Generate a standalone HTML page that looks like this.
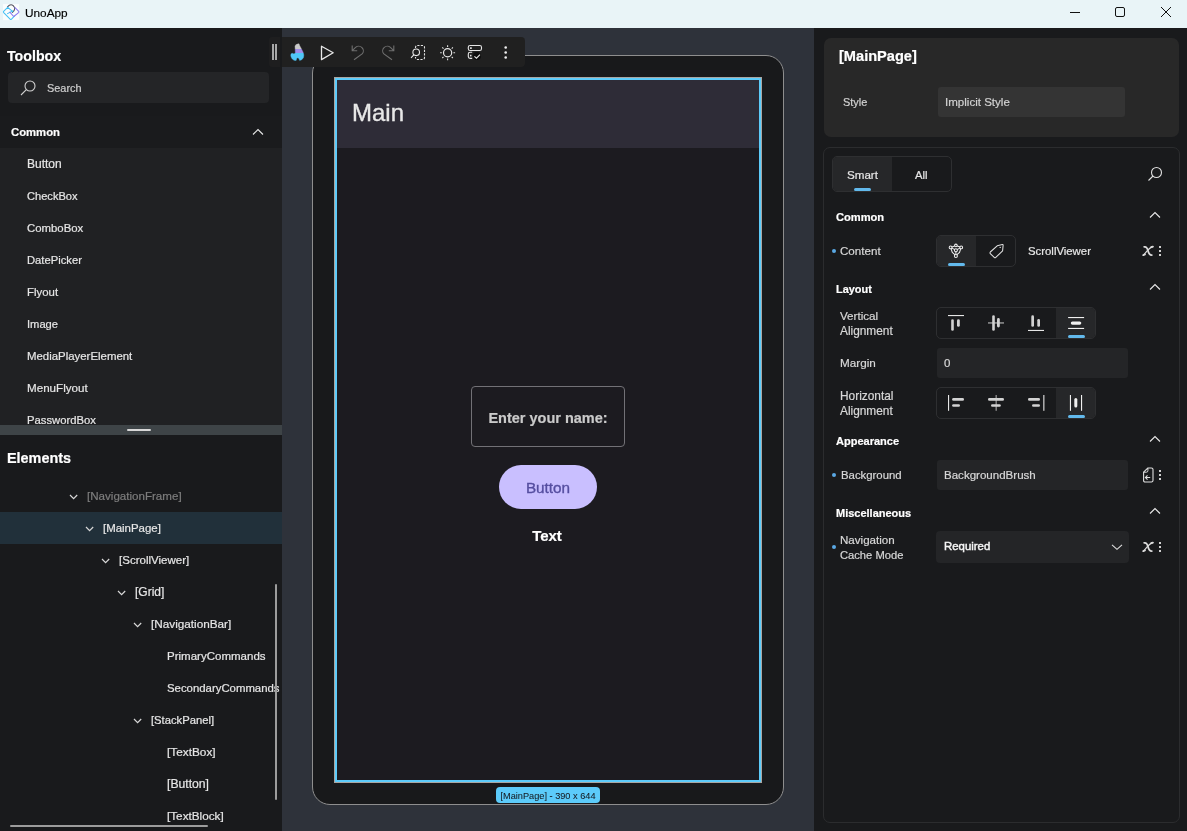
<!DOCTYPE html>
<html><head><meta charset="utf-8"><style>
html,body{margin:0;padding:0;width:1187px;height:831px;overflow:hidden;background:#1a1b1d;}
body{position:relative;font-family:"Liberation Sans",sans-serif;}
.a{position:absolute;box-sizing:border-box;}
.t{position:absolute;white-space:nowrap;line-height:1;-webkit-text-stroke:0.2px currentColor;will-change:transform;}
</style></head><body>
<div class="a" style="left:0px;top:0px;width:1187px;height:28px;background:#e9f4f7;"></div>
<svg class="a" style="left:2px;top:3px;" width="18" height="18" viewBox="0 0 18 18"><rect x="1.1" y="1.1" width="16" height="16" fill="#fbfdfd"/>
<g fill="none" stroke-width="1.05" stroke-linecap="round" stroke-linejoin="round">
<path d="M5.5 3.8 Q8.5 0.3 11.2 2.6 L12.4 4.2 Q13.6 6.3 10.4 9.4" stroke="#50505e"/>
<path d="M5.7 4.3 L1.6 8.3 Q1.1 9 1.7 9.7 L8.1 16.2 Q8.8 16.9 9.5 16.2 L12.4 13.1 M5.7 4.3 L10.8 8.7 M5.5 10.6 L10.6 8" stroke="#45c0f5"/>
<path d="M13 4.6 L16.7 8.3 Q17.2 9 16.6 9.6 L12.4 13 Q11.8 13.5 11.2 13 L7.9 9.2" stroke="#8a78f0"/>
</g></svg>
<div class="t" style="left:25px;top:8px;font-size:11.82px;font-weight:400;color:#000;-webkit-text-stroke:0.15px #000;">UnoApp</div>
<div class="a" style="left:1070px;top:12px;width:10px;height:1px;background:#111;"></div>
<svg class="a" style="left:1115px;top:7px;" width="10" height="10" viewBox="0 0 10 10"><rect x="0.5" y="0.5" width="9" height="9" rx="1.5" fill="none" stroke="#111" stroke-width="1"/></svg>
<svg class="a" style="left:1160px;top:6px;" width="12" height="12" viewBox="0 0 12 12"><path d="M1 1 L11 11 M11 1 L1 11" stroke="#111" stroke-width="1" fill="none"/></svg>
<div class="a" style="left:0px;top:28px;width:282px;height:803px;background:#191a1c;"></div>
<div class="t" style="left:7px;top:49px;font-size:14.2px;font-weight:700;color:#ffffff;">Toolbox</div>
<div class="a" style="left:8px;top:72px;width:261px;height:31px;background:#242527;border-radius:4px;"></div>
<svg class="a" style="left:19px;top:79px;" width="18" height="18" viewBox="0 0 18 18"><circle cx="11" cy="7" r="5" fill="none" stroke="#d0d0d0" stroke-width="1.1"/><path d="M7.3 10.7 L2 16" stroke="#d0d0d0" stroke-width="1.1"/></svg>
<div class="t" style="left:47px;top:83px;font-size:10.9px;font-weight:400;color:#cfcfcf;">Search</div>
<div class="a" style="left:0px;top:116px;width:282px;height:32px;background:#1a1b1d;"></div>
<div class="t" style="left:11px;top:127px;font-size:11.3px;font-weight:700;color:#ffffff;">Common</div>
<svg class="a" style="left:252px;top:128px;" width="12" height="8" viewBox="0 0 12 8"><path d="M1 6.5 L6 1.5 L11 6.5" stroke="#e8e8e8" stroke-width="1.1" fill="none"/></svg>
<div class="a" style="left:0px;top:148px;width:282px;height:277px;background:#202123;"></div>
<div class="t" style="left:27px;top:158px;font-size:12.0px;font-weight:400;color:#e6e6e6;">Button</div>
<div class="t" style="left:27px;top:191px;font-size:11.1px;font-weight:400;color:#e6e6e6;">CheckBox</div>
<div class="t" style="left:27px;top:223px;font-size:11.38px;font-weight:400;color:#e6e6e6;">ComboBox</div>
<div class="t" style="left:27px;top:255px;font-size:11.22px;font-weight:400;color:#e6e6e6;">DatePicker</div>
<div class="t" style="left:27px;top:287px;font-size:11.42px;font-weight:400;color:#e6e6e6;">Flyout</div>
<div class="t" style="left:27px;top:319px;font-size:11.16px;font-weight:400;color:#e6e6e6;">Image</div>
<div class="t" style="left:27px;top:351px;font-size:11.41px;font-weight:400;color:#e6e6e6;">MediaPlayerElement</div>
<div class="t" style="left:27px;top:382px;font-size:11.62px;font-weight:400;color:#e6e6e6;">MenuFlyout</div>
<div class="t" style="left:27px;top:415px;font-size:11.27px;font-weight:400;color:#e6e6e6;">PasswordBox</div>
<div class="a" style="left:0px;top:425px;width:282px;height:10px;background:#3e4447;"></div>
<div class="a" style="left:127px;top:429px;width:24px;height:2px;background:#d8d8d8;border-radius:1px;"></div>
<div class="a" style="left:0px;top:435px;width:282px;height:396px;background:#191a1c;"></div>
<div class="t" style="left:7px;top:451px;font-size:14.4px;font-weight:700;color:#ffffff;">Elements</div>
<div class="a" style="left:0px;top:512px;width:282px;height:32px;background:#21303a;"></div>
<svg class="a" style="left:68.7px;top:492.5px;" width="9" height="7" viewBox="0 0 9 7"><path d="M1 2 L4.6 5.6 L8.2 2" stroke="#d8d8d8" stroke-width="1.2" fill="none"/></svg>
<div class="t" style="left:86.7px;top:491px;font-size:11.58px;font-weight:400;color:#7d7d7d;">[NavigationFrame]</div>
<svg class="a" style="left:84.7px;top:524.5px;" width="9" height="7" viewBox="0 0 9 7"><path d="M1 2 L4.6 5.6 L8.2 2" stroke="#d8d8d8" stroke-width="1.2" fill="none"/></svg>
<div class="t" style="left:102.7px;top:523px;font-size:11.44px;font-weight:400;color:#e6e6e6;">[MainPage]</div>
<svg class="a" style="left:100.7px;top:556.5px;" width="9" height="7" viewBox="0 0 9 7"><path d="M1 2 L4.6 5.6 L8.2 2" stroke="#d8d8d8" stroke-width="1.2" fill="none"/></svg>
<div class="t" style="left:118.7px;top:555px;font-size:11.53px;font-weight:400;color:#e6e6e6;">[ScrollViewer]</div>
<svg class="a" style="left:116.69999999999999px;top:588.5px;" width="9" height="7" viewBox="0 0 9 7"><path d="M1 2 L4.6 5.6 L8.2 2" stroke="#d8d8d8" stroke-width="1.2" fill="none"/></svg>
<div class="t" style="left:134.7px;top:586px;font-size:12.02px;font-weight:400;color:#e6e6e6;">[Grid]</div>
<svg class="a" style="left:132.7px;top:620.5px;" width="9" height="7" viewBox="0 0 9 7"><path d="M1 2 L4.6 5.6 L8.2 2" stroke="#d8d8d8" stroke-width="1.2" fill="none"/></svg>
<div class="t" style="left:150.7px;top:618px;font-size:11.74px;font-weight:400;color:#e6e6e6;">[NavigationBar]</div>
<div class="t" style="left:166.7px;top:651px;font-size:11.52px;font-weight:400;color:#e6e6e6;">PrimaryCommands</div>
<div class="t" style="left:166.7px;top:683px;font-size:11.38px;font-weight:400;color:#e6e6e6;">SecondaryCommands</div>
<svg class="a" style="left:132.7px;top:716.5px;" width="9" height="7" viewBox="0 0 9 7"><path d="M1 2 L4.6 5.6 L8.2 2" stroke="#d8d8d8" stroke-width="1.2" fill="none"/></svg>
<div class="t" style="left:150.7px;top:715px;font-size:11.24px;font-weight:400;color:#e6e6e6;">[StackPanel]</div>
<div class="t" style="left:166.7px;top:747px;font-size:11.82px;font-weight:400;color:#e6e6e6;">[TextBox]</div>
<div class="t" style="left:166.7px;top:778px;font-size:12.2px;font-weight:400;color:#e6e6e6;">[Button]</div>
<div class="t" style="left:166.7px;top:810px;font-size:11.73px;font-weight:400;color:#e6e6e6;">[TextBlock]</div>
<div class="a" style="left:275px;top:584px;width:2px;height:216px;background:#9c9c9c;border-radius:1px;"></div>
<div class="a" style="left:10px;top:825px;width:198px;height:2px;background:#9c9c9c;border-radius:1px;"></div>
<div class="a" style="left:282px;top:28px;width:532px;height:803px;background:#2e323a;"></div>
<div class="a" style="left:312px;top:55px;width:472px;height:750px;background:#18191b;border:1px solid #8e8e8e;border-radius:18px;"></div>
<div class="a" style="left:334px;top:77px;width:428px;height:706px;background:#1c1b20;border:1px solid #a9a6a2;"></div>
<div class="a" style="left:335px;top:78px;width:426px;height:704px;border:2px solid #5ccbfa;"></div>
<div class="a" style="left:337px;top:80px;width:422px;height:68px;background:#2e2c37;"></div>
<div class="t" style="left:352px;top:101px;font-size:24.0px;font-weight:400;color:#e8e8e8;-webkit-text-stroke:0.35px #e8e8e8;">Main</div>
<div class="a" style="left:471px;top:386px;width:154px;height:61px;border:1px solid #727176;border-radius:4px;"></div>
<div class="t" style="left:247.5px;width:600px;text-align:center;top:411px;font-size:14.5px;font-weight:700;color:#cacaca;">Enter your name:</div>
<div class="a" style="left:499px;top:465px;width:98px;height:43.5px;background:#c9bfff;border-radius:22px;"></div>
<div class="t" style="left:248px;width:600px;text-align:center;top:480px;font-size:15.3px;font-weight:400;color:#554ea0;-webkit-text-stroke:0.35px #554ea0;">Button</div>
<div class="t" style="left:247px;width:600px;text-align:center;top:528px;font-size:15.0px;font-weight:700;color:#ffffff;">Text</div>
<div class="a" style="left:496px;top:787px;width:104px;height:16px;background:#5ccbfa;border-radius:4px;"></div>
<div class="t" style="left:248px;width:600px;text-align:center;top:792px;font-size:9.2px;font-weight:400;color:#151a20;-webkit-text-stroke:0.05px #151a20;">[MainPage] - 390 x 644</div>
<div class="a" style="left:282px;top:37px;width:243px;height:30px;background:#202020;border-radius:0 4px 4px 0;"></div>
<div class="a" style="left:269px;top:37px;width:11px;height:30px;background:#1e1e1f;border-radius:3px 0 0 3px;"></div>
<div class="a" style="left:272px;top:44px;width:2px;height:16px;background:#a8a8a8;"></div>
<div class="a" style="left:275px;top:44px;width:2px;height:16px;background:#a8a8a8;"></div>
<svg class="a" style="left:286px;top:40px;" width="54" height="24" viewBox="0 0 54 24"><path d="M35.5 6.2 L47.2 12.8 L35.5 19.6 Z" fill="none" stroke="#e8e8e8" stroke-width="1.3" stroke-linejoin="round"/></svg>
<svg class="a" style="left:288px;top:42px;" width="20" height="20" viewBox="0 0 20 20"><defs><linearGradient id="fl2" gradientUnits="userSpaceOnUse" x1="0" y1="2" x2="0" y2="18.5"><stop offset="0" stop-color="#c9c9c9"/><stop offset="0.31" stop-color="#c9c9c9"/><stop offset="0.31" stop-color="#9f8de8"/><stop offset="0.55" stop-color="#9f8de8"/><stop offset="0.55" stop-color="#50c7f7"/><stop offset="1" stop-color="#50c7f7"/></linearGradient></defs>
<path d="M11 1.8 L11.6 3.5 L13.5 7 L15.2 10.5 L15.8 13 L15.5 15.5 L14 17.5 L11.7 18.5 L10.9 16.6 L9.8 15.7 L8.8 16.3 L8.1 18.5 L6 18.3 L3.8 16.5 L2.8 14 L3 11.9 L4.2 11.3 L6 11.9 L7.4 11 L7.2 7 L7 4.2 L7.8 2.8 L9.5 2.1 Z" fill="url(#fl2)" stroke="url(#fl2)" stroke-width="0.4" stroke-linejoin="round"/></svg>
<svg class="a" style="left:346px;top:40px;" width="54" height="24" viewBox="0 0 54 24"><path d="M6.2 5.6 V10.7 H11.2 M6.5 10.4 L9.6 7.4 A4.6 4.6 0 0 1 16.1 13.9 L8 19.8" fill="none" stroke="#6e6e6e" stroke-width="1.1"/><g transform="translate(54,0) scale(-1,1)"><path d="M6.2 5.6 V10.7 H11.2 M6.5 10.4 L9.6 7.4 A4.6 4.6 0 0 1 16.1 13.9 L8 19.8" fill="none" stroke="#6e6e6e" stroke-width="1.1"/></g></svg>
<svg class="a" style="left:406px;top:40px;" width="54" height="24" viewBox="0 0 54 24"><rect x="9.5" y="5.5" width="9" height="14" rx="1.8" fill="none" stroke="#e0e0e0" stroke-width="1.1" stroke-dasharray="2.2 1.3"/>
<rect x="6" y="8" width="8" height="9" fill="#1f1f1f"/>
<circle cx="10.2" cy="12.3" r="3.3" fill="none" stroke="#e8e8e8" stroke-width="1.1"/>
<path d="M7.8 14.8 L5 17.8" stroke="#e8e8e8" stroke-width="1.1"/>
<circle cx="41.6" cy="12.7" r="4.1" fill="none" stroke="#e8e8e8" stroke-width="1.2"/>
<g stroke="#e0e0e0" stroke-width="1.1">
<path d="M41.6 5.2 V6.9 M41.6 18.5 V20.2 M34.1 12.7 H35.8 M47.4 12.7 H49.1 M36.3 7.4 L37.5 8.6 M45.7 16.8 L46.9 18 M46.9 7.4 L45.7 8.6 M37.5 16.8 L36.3 18"/></g></svg>
<svg class="a" style="left:462px;top:40px;" width="54" height="24" viewBox="0 0 54 24"><rect x="6.3" y="5.5" width="13.2" height="5" rx="1.8" fill="none" stroke="#e6e6e6" stroke-width="1.1"/>
<rect x="8" y="7.3" width="1.8" height="1.6" fill="#e6e6e6"/>
<path d="M10.2 12.3 H8.1 Q6.3 12.3 6.3 14.1 V16.6 Q6.3 18.4 8.1 18.4 H10.2" fill="none" stroke="#e6e6e6" stroke-width="1.1"/>
<rect x="8" y="14.8" width="1.5" height="1.6" fill="#e6e6e6"/>
<circle cx="15" cy="16" r="4" fill="#0e0e0e"/>
<path d="M12.4 16.3 L14.5 18.2 L18 14.6" fill="none" stroke="#e6e6e6" stroke-width="1.1"/>
<circle cx="43.7" cy="7.5" r="1.3" fill="#f0f0f0"/><circle cx="43.7" cy="12.5" r="1.3" fill="#f0f0f0"/><circle cx="43.7" cy="17.5" r="1.3" fill="#f0f0f0"/></svg>
<div class="a" style="left:814px;top:28px;width:373px;height:803px;background:#191a1c;"></div>
<div class="a" style="left:824px;top:38px;width:355px;height:99px;background:#282828;border-radius:7px;"></div>
<div class="t" style="left:839px;top:49px;font-size:14.6px;font-weight:700;color:#ffffff;">[MainPage]</div>
<div class="t" style="left:843px;top:97px;font-size:10.93px;font-weight:400;color:#d2d2d2;">Style</div>
<div class="a" style="left:938px;top:87px;width:187px;height:30px;background:#343434;border-radius:3px;"></div>
<div class="t" style="left:945px;top:97px;font-size:11.55px;font-weight:400;color:#d2d2d2;">Implicit Style</div>
<div class="a" style="left:823px;top:147px;width:357px;height:676px;border:1px solid #2b2c2e;border-radius:7px;"></div>
<div class="a" style="left:832px;top:156px;width:120px;height:36px;border:1px solid #2e2f31;border-radius:5px;"></div>
<div class="a" style="left:833px;top:157px;width:59px;height:34px;background:#262729;border-radius:4px 0 0 4px;"></div>
<div class="t" style="left:847px;top:169px;font-size:11.6px;font-weight:400;color:#e6e6e6;">Smart</div>
<div class="a" style="left:854px;top:188px;width:17px;height:3px;background:#62b9ec;border-radius:1.5px;"></div>
<div class="t" style="left:915px;top:170px;font-size:11.25px;font-weight:400;color:#e6e6e6;">All</div>
<svg class="a" style="left:1147px;top:166px;" width="16" height="16" viewBox="0 0 16 16"><circle cx="9.5" cy="6.5" r="5" fill="none" stroke="#e0e0e0" stroke-width="1.1"/><path d="M6 10 L1.5 14.5" stroke="#e0e0e0" stroke-width="1.1"/></svg>
<div class="t" style="left:836px;top:212px;font-size:11.12px;font-weight:700;color:#ffffff;">Common</div>
<svg class="a" style="left:1149px;top:211px;" width="12" height="8" viewBox="0 0 12 8"><path d="M1 6.5 L6 1.5 L11 6.5" stroke="#e8e8e8" stroke-width="1.1" fill="none"/></svg>
<div class="a" style="left:832px;top:249px;width:4px;height:4px;background:#5aa8e4;border-radius:50%;"></div>
<div class="t" style="left:840px;top:245px;font-size:11.6px;font-weight:400;color:#d8d8d8;">Content</div>
<div class="a" style="left:936px;top:235px;width:80px;height:32px;border:1px solid #2e2f31;border-radius:5px;"></div>
<div class="a" style="left:937px;top:236px;width:39px;height:30px;background:#262729;border-radius:4px 0 0 4px;"></div>
<div class="a" style="left:948px;top:263px;width:17px;height:3px;background:#62b9ec;border-radius:1.5px;"></div>
<div class="t" style="left:1028px;top:246px;font-size:11.37px;font-weight:400;color:#e6e6e6;">ScrollViewer</div>
<svg class="a" style="left:1136px;top:238px;" width="32" height="24" viewBox="0 0 32 24"><g fill="none" stroke="#dcdcdc" stroke-linecap="round">
<path d="M8.2 8.9 C10.4 8.4 11.4 10.2 12.1 13 C12.8 16 13.5 17.2 15.8 17.1" stroke-width="1.8"/>
<path d="M16.8 8.7 C13.2 9.5 10.6 13.8 7.3 17.2" stroke-width="1.2"/>
<path d="M15.2 9.2 L16.9 8.6" stroke-width="1.8"/><path d="M7.3 17.1 L9 16.4" stroke-width="1.8"/>
</g></svg>
<div class="a" style="left:1159.2px;top:246.2px;width:2.0px;height:2.0px;background:#d0d0d0;"></div>
<div class="a" style="left:1159.2px;top:250px;width:2.0px;height:2px;background:#d0d0d0;"></div>
<div class="a" style="left:1159.2px;top:253.8px;width:2.0px;height:2.0px;background:#d0d0d0;"></div>
<div class="t" style="left:836px;top:284px;font-size:10.95px;font-weight:700;color:#ffffff;">Layout</div>
<svg class="a" style="left:1149px;top:283px;" width="12" height="8" viewBox="0 0 12 8"><path d="M1 6.5 L6 1.5 L11 6.5" stroke="#e8e8e8" stroke-width="1.1" fill="none"/></svg>
<div class="t" style="left:840px;top:310px;font-size:11.65px;font-weight:400;color:#d8d8d8;">Vertical</div>
<div class="t" style="left:840px;top:326px;font-size:11.87px;font-weight:400;color:#d8d8d8;">Alignment</div>
<div class="a" style="left:936px;top:307px;width:160px;height:32px;border:1px solid #2e2f31;border-radius:5px;"></div>
<div class="a" style="left:1056px;top:308px;width:39px;height:30px;background:#262729;border-radius:0 4px 4px 0;"></div>
<div class="a" style="left:1068px;top:335px;width:17px;height:3px;background:#62b9ec;border-radius:1.5px;"></div>
<div class="t" style="left:840px;top:357px;font-size:11.71px;font-weight:400;color:#d8d8d8;">Margin</div>
<div class="a" style="left:937px;top:348px;width:191px;height:30px;background:#242527;border-radius:3px;"></div>
<div class="t" style="left:944px;top:358px;font-size:11.5px;font-weight:400;color:#d8d8d8;">0</div>
<div class="t" style="left:840px;top:391px;font-size:11.88px;font-weight:400;color:#d8d8d8;">Horizontal</div>
<div class="t" style="left:840px;top:406px;font-size:11.87px;font-weight:400;color:#d8d8d8;">Alignment</div>
<div class="a" style="left:936px;top:387px;width:160px;height:32px;border:1px solid #2e2f31;border-radius:5px;"></div>
<div class="a" style="left:1056px;top:388px;width:39px;height:30px;background:#262729;border-radius:0 4px 4px 0;"></div>
<div class="a" style="left:1068px;top:415px;width:17px;height:3px;background:#62b9ec;border-radius:1.5px;"></div>
<div class="t" style="left:836px;top:436px;font-size:11.02px;font-weight:700;color:#ffffff;">Appearance</div>
<svg class="a" style="left:1149px;top:435px;" width="12" height="8" viewBox="0 0 12 8"><path d="M1 6.5 L6 1.5 L11 6.5" stroke="#e8e8e8" stroke-width="1.1" fill="none"/></svg>
<div class="a" style="left:832px;top:473px;width:4px;height:4px;background:#5aa8e4;border-radius:50%;"></div>
<div class="t" style="left:840.5px;top:470px;font-size:11.37px;font-weight:400;color:#d8d8d8;">Background</div>
<div class="a" style="left:937px;top:460px;width:191px;height:30px;background:#242527;border-radius:3px;"></div>
<div class="t" style="left:944px;top:470px;font-size:11.55px;font-weight:400;color:#d8d8d8;">BackgroundBrush</div>
<div class="a" style="left:1159.2px;top:470.2px;width:2.0px;height:2.0px;background:#d0d0d0;"></div>
<div class="a" style="left:1159.2px;top:474px;width:2.0px;height:2px;background:#d0d0d0;"></div>
<div class="a" style="left:1159.2px;top:477.8px;width:2.0px;height:2.0px;background:#d0d0d0;"></div>
<div class="t" style="left:836px;top:508px;font-size:10.99px;font-weight:700;color:#ffffff;">Miscellaneous</div>
<svg class="a" style="left:1149px;top:507px;" width="12" height="8" viewBox="0 0 12 8"><path d="M1 6.5 L6 1.5 L11 6.5" stroke="#e8e8e8" stroke-width="1.1" fill="none"/></svg>
<div class="a" style="left:832px;top:545px;width:4px;height:4px;background:#5aa8e4;border-radius:50%;"></div>
<div class="t" style="left:840px;top:535px;font-size:11.58px;font-weight:400;color:#d8d8d8;">Navigation</div>
<div class="t" style="left:840px;top:550px;font-size:11.18px;font-weight:400;color:#d8d8d8;">Cache Mode</div>
<div class="a" style="left:936px;top:531px;width:193px;height:32px;background:#242527;border-radius:4px;"></div>
<div class="t" style="left:944px;top:541px;font-size:11.4px;font-weight:400;color:#f5f5f5;-webkit-text-stroke:0.45px #f5f5f5;">Required</div>
<svg class="a" style="left:1110px;top:543px;" width="14" height="8" viewBox="0 0 14 8"><path d="M2 1.8 L7 6.3 L12 1.8" stroke="#e0e0e0" stroke-width="1.1" fill="none"/></svg>
<svg class="a" style="left:1136px;top:534px;" width="32" height="24" viewBox="0 0 32 24"><g fill="none" stroke="#dcdcdc" stroke-linecap="round">
<path d="M8.2 8.9 C10.4 8.4 11.4 10.2 12.1 13 C12.8 16 13.5 17.2 15.8 17.1" stroke-width="1.8"/>
<path d="M16.8 8.7 C13.2 9.5 10.6 13.8 7.3 17.2" stroke-width="1.2"/>
<path d="M15.2 9.2 L16.9 8.6" stroke-width="1.8"/><path d="M7.3 17.1 L9 16.4" stroke-width="1.8"/>
</g></svg>
<div class="a" style="left:1159.2px;top:542.2px;width:2.0px;height:2.0px;background:#d0d0d0;"></div>
<div class="a" style="left:1159.2px;top:546px;width:2.0px;height:2px;background:#d0d0d0;"></div>
<div class="a" style="left:1159.2px;top:549.8px;width:2.0px;height:2.0px;background:#d0d0d0;"></div>
<svg class="a" style="left:940px;top:238px;" width="72" height="26" viewBox="0 0 72 26"><g fill="none" stroke="#eeeeee" stroke-width="1.05">
<path d="M10.6 9.4 L15.9 7.6 L21.2 9.4 L19.5 14.5 L15.9 17.6 L12.3 14.5 Z"/>
<path d="M10.6 9.4 L15.9 12.1 L21.2 9.4 M15.9 12.1 V17.6"/>
<circle cx="10.6" cy="9.4" r="1.4" fill="#262729"/><circle cx="21.2" cy="9.4" r="1.4" fill="#262729"/>
<circle cx="15.9" cy="7.4" r="1.3" fill="#262729"/><circle cx="15.9" cy="12.2" r="1.5" fill="#262729"/>
<circle cx="15.9" cy="18" r="1.5" fill="#262729"/>
</g>
<g fill="none" stroke="#e0e0e0" stroke-width="1.05" stroke-linejoin="round">
<path d="M57.2 7.8 L62.3 6.6 Q63.3 6.4 63.1 7.4 L62.6 12.8 L55.8 19.4 Q55 20.2 54.2 19.4 L50.3 15.6 Q49.5 14.8 50.3 14 Z"/>
<circle cx="60.2" cy="9.4" r="0.7" fill="#e0e0e0" stroke="none"/>
</g></svg>
<svg class="a" style="left:940px;top:310px;" width="160" height="30" viewBox="0 0 160 30"><g fill="#d2d2d2">
<rect x="8" y="5" width="16" height="1.1" fill="#e6e6e6"/>
<rect x="11.2" y="9.2" width="2.6" height="11.6" rx="1.3"/><rect x="17" y="9.2" width="2.8" height="7.6" rx="1.4"/>
<rect x="48" y="12.4" width="16" height="1.1" fill="#bdbdbd"/>
<rect x="52.2" y="5.3" width="2.6" height="15.5" rx="1.3"/><rect x="57" y="8.1" width="2.8" height="9.3" rx="1.4"/>
<rect x="88" y="19.9" width="16" height="1.1" fill="#e6e6e6"/>
<rect x="91.3" y="5.3" width="2.7" height="11.5" rx="1.35"/><rect x="97.3" y="9" width="2.7" height="7.8" rx="1.35"/>
<rect x="128.1" y="7" width="16" height="1.1" fill="#f0f0f0"/><rect x="128.1" y="17.9" width="16" height="1.1" fill="#f0f0f0"/>
<rect x="130.8" y="11.4" width="10.5" height="3.3" rx="1.65" fill="#f0f0f0"/>
</g></svg>
<svg class="a" style="left:940px;top:390px;" width="160" height="30" viewBox="0 0 160 30"><g fill="#d2d2d2">
<rect x="8" y="5" width="1.1" height="15.8" fill="#e6e6e6"/>
<rect x="12.1" y="8.1" width="11.9" height="2.7" rx="1.35"/><rect x="12.1" y="14.2" width="7.9" height="2.6" rx="1.3"/>
<rect x="55.6" y="5" width="1.1" height="15.8" fill="#a8a8a8"/>
<rect x="48" y="8.1" width="16" height="2.7" rx="1.35"/><rect x="51" y="14.2" width="9.8" height="2.6" rx="1.3"/>
<rect x="103.3" y="5" width="1.1" height="15.8" fill="#e6e6e6"/>
<rect x="88" y="8.1" width="12" height="2.7" rx="1.35"/><rect x="92" y="14.2" width="8" height="2.6" rx="1.3"/>
<rect x="129.9" y="5" width="1.1" height="15.8" fill="#f0f0f0"/><rect x="141" y="5" width="1.1" height="15.8" fill="#f0f0f0"/>
<rect x="134.3" y="8.1" width="3" height="9.3" rx="1.5" fill="#f0f0f0"/>
</g></svg>
<svg class="a" style="left:1136px;top:462px;" width="24" height="24" viewBox="0 0 24 24"><path d="M7.6 10.2 L11.8 6 H15.4 Q17 6 17 7.6 V18.4 Q17 20 15.4 20 H9.2 Q7.6 20 7.6 18.4 Z" fill="none" stroke="#e0e0e0" stroke-width="1.1"/>
<path d="M14.2 15.5 H9.5 M11.5 13.4 L9.4 15.5 L11.5 17.6" fill="none" stroke="#e0e0e0" stroke-width="1.1"/><path d="M7.8 10.2 H10.4 Q11.9 10.2 11.9 8.7 V6.2" fill="none" stroke="#e0e0e0" stroke-width="1"/></svg>
</body></html>
